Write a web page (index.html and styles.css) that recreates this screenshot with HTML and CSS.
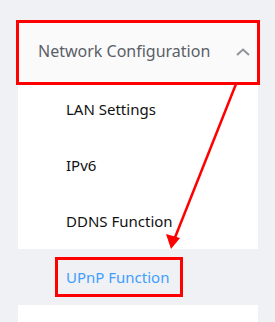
FILE: index.html
```html
<!DOCTYPE html>
<html lang="en">
<head>
    <meta charset="UTF-8">
    <title>Network Configuration</title>
    <link rel="stylesheet" href="styles.css">
</head>
<body>
    <div class="menu">
        <!-- Submenu header -->
        <div class="submenu-title">
            <span>Network Configuration</span>
            <svg class="chevron" width="14" height="8" viewBox="0 0 14 8">
                <polyline points="1,7 7,1.5 13,7" fill="none" stroke="#909399" stroke-width="2"/>
            </svg>
        </div>
        <ul class="submenu">
            <li class="menu-item">LAN Settings</li>
            <li class="menu-item">IPv6</li>
            <li class="menu-item">DDNS Function</li>
            <li class="menu-item active"><span class="mark">UPnP Function</span></li>
            <li class="menu-item rest"></li>
        </ul>
    </div>

    <!-- annotation arrow -->
    <svg class="arrow" width="275" height="322" viewBox="0 0 275 322">
        <line x1="236" y1="84" x2="174" y2="240" stroke="#ff0000" stroke-width="2.5"/>
        <polygon points="171,249 166,234 180,238" fill="#ff0000"/>
    </svg>
</body>
</html>
```

FILE: styles.css
```css
body {
    margin: 0;
    background-color: #f0f1f5;
    font-family: "Noto Sans", "Open Sans", sans-serif;
    overflow: hidden;
}
.menu {
    width: 240px;
    margin: 21px 0 0 18px;
    background-color: #fff;
}
.submenu-title {
    position: relative;
    height: 60px;
    padding: 0 8px 0 20px;
    display: flex;
    align-items: center;
    justify-content: space-between;
    background-color: #fafafa;
    color: #5b5f68;
    font-size: 16px;
}
.submenu-title::after {
    content: "";
    position: absolute;
    left: -2px;
    right: -2px;
    top: -1px;
    bottom: -4px;
    border: 3px solid #ff0000;
}
.chevron {
    display: block;
    margin-top: 1px;
}
.submenu {
    list-style: none;
    margin: 0;
    padding: 0;
}
.menu-item {
    height: 56px;
    padding-left: 48px;
    display: flex;
    align-items: center;
    color: #111;
    font-size: 15px;
}
.menu-item.active {
    padding-left: 37px;
    background-color: #f0f1f5;
    color: #409eff;
}
.menu-item.rest {
    height: 17px;
}
.mark {
    border: 3px solid #ff0000;
    height: 34px;
    width: 114px;
    padding-left: 8px;
    display: flex;
    align-items: center;
}
.arrow {
    position: absolute;
    left: 0;
    top: 0;
}
```
